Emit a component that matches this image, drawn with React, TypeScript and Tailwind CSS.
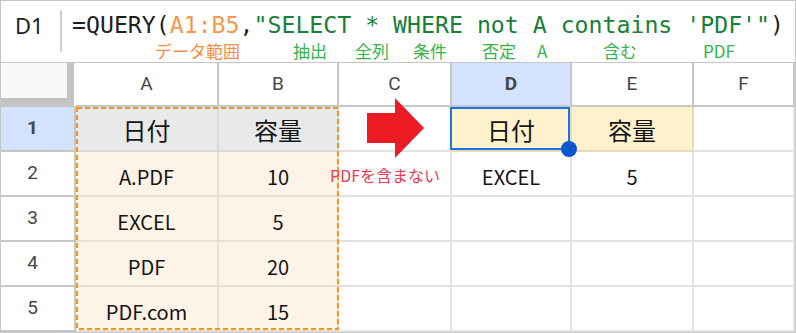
const headCell =
  "flex items-center justify-center border-r-2 border-b-2 border-[#c7c7c7] text-[19px] text-[#444746]";
const rowHead =
  "flex items-center justify-center pr-[10px] border-r-2 border-b-2 border-[#c7c7c7] text-[19px] text-[#444746]";
const body =
  "flex items-end justify-center pb-[8px] border-r-2 border-b-2 font-['Noto_Sans_CJK_JP',sans-serif] leading-none text-[#141414]";

const srcRows = [
  ["A.PDF", "10"],
  ["EXCEL", "5"],
  ["PDF", "20"],
  ["PDF.com", "15"],
];

function FormulaBar() {
  return (
    <div className="flex h-[62px] border-b border-[#c6c6c6]">
      <div className="w-[59px] pl-[14px] pt-[10px] font-['Noto_Sans',sans-serif] text-[22px] leading-[28px] text-[#1f1f1f]">
        D1
      </div>
      <div className="mt-[9px] h-[42px] w-[2px] bg-[#cfcfcf]" />
      <div className="pl-[10px] pt-[10px]">
        <div className="whitespace-pre font-['DejaVu_Sans_Mono',monospace] text-[23.2px] leading-[28px] text-[#1f1f1f]">
          =QUERY(<span className="text-[#f5994f]">A1:B5</span>,
          <span className="text-[#188038]">"SELECT * WHERE not A contains 'PDF'"</span>)
        </div>
        <div className="mt-[3px] flex font-['Noto_Sans_CJK_JP',sans-serif] text-[17px] leading-none text-[#34b34a]">
          <div className="w-[83px] shrink-0" />
          <div className="w-[138px] shrink-0 text-[#f78b3e]">データ範囲</div>
          <div className="w-[62px] shrink-0">抽出</div>
          <div className="w-[58px] shrink-0">全列</div>
          <div className="w-[69px] shrink-0">条件</div>
          <div className="w-[55px] shrink-0">否定</div>
          <div className="w-[66px] shrink-0">A</div>
          <div className="w-[100px] shrink-0">含む</div>
          <div className="shrink-0">PDF</div>
        </div>
      </div>
    </div>
  );
}

export default function App() {
  return (
    <div className="relative h-[333px] w-[796px] overflow-hidden border border-[#c6c6c6] bg-white font-['Roboto',sans-serif]">
      <FormulaBar />
      <div className="relative grid grid-cols-[75px_143px_120px_113px_120px_122px_101px] grid-rows-[44px_45px_45px_45px_45px_45px]">
        {/* column headers */}
        <div className="border-b border-[#c7c7c7] bg-white pr-[1px]">
          <div className="h-[43px] w-[73px] border-r-[7px] border-b-[8px] border-[#c4c4c4] bg-[#f8f9fa]" />
        </div>
        <div className={headCell}>A</div>
        <div className={headCell}>B</div>
        <div className={headCell}>C</div>
        <div className={`${headCell} bg-[#d3e3fd] font-bold text-[#041e49]`}>D</div>
        <div className={headCell}>E</div>
        <div className={`${headCell} border-r-0`}>F</div>

        {/* row 1 */}
        <div className={`${rowHead} bg-[#d3e3fd] font-bold text-[#041e49]`}>1</div>
        <div className={`${body} bg-[#e8eae9] border-[#d9dbda] text-[24px]`}>日付</div>
        <div className={`${body} bg-[#e8eae9] border-[#d9dbda] text-[24px]`}>容量</div>
        <div className={`${body} border-[#e2e2e2]`} />
        <div className={`${body} relative bg-[#fff2cc] border-[#e9dcb5] text-[24px]`}>
          日付
          <div className="absolute top-0 -left-[2px] right-0 bottom-0 z-10 border-2 border-[#1a73e8]" />
          <div className="absolute -right-[7px] -bottom-[7px] z-20 h-4 w-4 rounded-full bg-[#0b57d0]" />
        </div>
        <div className={`${body} bg-[#fff2cc] border-[#e9dcb5] text-[24px]`}>容量</div>
        <div className={`${body} border-r-0 border-[#e2e2e2]`} />

        {/* rows 2-5 */}
        {srcRows.map(([name, size], i) => (
          <div key={name} className="contents">
            <div className={rowHead}>{i + 2}</div>
            <div className={`${body} bg-[#fdf3e6] border-[#e8dfd2] text-[20px]`}>{name}</div>
            <div className={`${body} bg-[#fdf3e6] border-[#e8dfd2] text-[20px]`}>{size}</div>
            <div className={`${body} border-[#e2e2e2]`} />
            <div className={`${body} border-[#e2e2e2] text-[20px]`}>{i === 0 ? "EXCEL" : ""}</div>
            <div className={`${body} border-[#e2e2e2] text-[20px]`}>{i === 0 ? "5" : ""}</div>
            <div className={`${body} border-r-0 border-[#e2e2e2]`} />
          </div>
        ))}

        {/* copy range marquee */}
        <svg className="absolute left-[75px] top-[44px] h-[223px] w-[263px]" viewBox="0 0 263 223">
          <rect x="1" y="1" width="261" height="221" fill="none" stroke="#f7931e" strokeWidth="2" strokeDasharray="5 3" />
        </svg>

        {/* arrow */}
        <svg className="absolute left-[366px] top-[35px] h-[61px] w-[57px]" viewBox="0 0 57 61">
          <polygon points="0,15 28,15 28,0 57,30 28,60 28,45 0,45" fill="#ed1c24" />
        </svg>

        <div className="absolute left-[329px] top-[104px] whitespace-nowrap font-['Noto_Sans_CJK_JP',sans-serif] text-[16px] leading-none text-[#ec3a52]">
          PDFを含まない
        </div>
      </div>
    </div>
  );
}
